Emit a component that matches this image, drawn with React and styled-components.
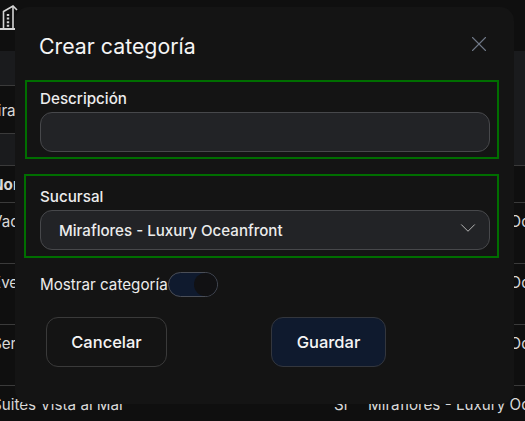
import React from "react";
import styled, { createGlobalStyle } from "styled-components";
import { X, ChevronDown } from "lucide-react";

const GlobalStyle = createGlobalStyle`
  html, body {
    margin: 0;
    padding: 0;
    background: #0f0f0f;
    font-family: "Inter", "Liberation Sans", sans-serif;
    overflow: hidden;
  }
`;

const Page = styled.div`
  position: relative;
  width: 525px;
  height: 421px;
  overflow: hidden;
  background: #0f0f0f;
  color: #d8d8d8;
`;

const TopBar = styled.div`
  height: 51px;
  color: #d4d4d4;
`;

const FilterBlock = styled.div`
  height: 115px;
  box-sizing: border-box;
  padding-top: 34px;
  background: #1a1b1d;
  border-bottom: 1px solid #3a3a3a;
`;

const FilterCell = styled.div`
  width: 300px;
  height: 49px;
  box-sizing: border-box;
  padding-top: 15px;
  margin-left: -16px;
  background: #0f0f0f;
  border-top: 1px solid #3a3a3a;
  border-bottom: 1px solid #3a3a3a;
  font-size: 15.2px;
  white-space: nowrap;
`;

const Row = styled.div`
  display: grid;
  grid-template-columns: 342px 34px 1fr;
  height: ${(p) => p.$h}px;
  margin-left: -8px;
  padding-top: 9px;
  box-sizing: border-box;
  border-bottom: 1px solid ${(p) => (p.$plain ? "transparent" : "#3a3a3a")};
  font-size: 15.2px;
  font-weight: ${(p) => (p.$bold ? 700 : 400)};
  white-space: nowrap;
`;

const Modal = styled.div`
  position: absolute;
  left: 15px;
  top: 7px;
  width: 499px;
  height: 397px;
  box-sizing: border-box;
  padding: 20px 24px 0 10px;
  background: #141414;
  border-radius: 14px;
  color: #f2f2f2;
`;

const Header = styled.div`
  display: flex;
  align-items: center;
  justify-content: space-between;
  height: 38px;
  padding-left: 14px;
  margin-bottom: 15px;
`;

const Title = styled.h2`
  margin: 0;
  font-size: 21.3px;
  font-weight: 400;
  color: #f5f5f5;
`;

const Close = styled.button`
  display: flex;
  padding: 0;
  margin: 0 -2px 4px 0;
  border: none;
  background: none;
  color: #6f7887;
`;

const FieldBox = styled.div`
  box-sizing: border-box;
  width: ${(p) => p.$w}px;
  height: ${(p) => p.$h}px;
  margin-left: ${(p) => (p.$w === 475 ? -1 : 0)}px;
  padding: ${(p) => p.$top}px 7px 0 ${(p) => (p.$w === 475 ? 14 : 13)}px;
  border: 2px solid #006e00;
  margin-bottom: ${(p) => p.$gap}px;
`;

const Label = styled.label`
  display: block;
  height: 23px;
  margin-bottom: 2px;
  line-height: 23px;
  font-size: 15.2px;
  font-weight: 500;
  color: #ececec;
`;

const Input = styled.div`
  display: flex;
  align-items: center;
  justify-content: space-between;
  box-sizing: border-box;
  height: 40px;
  padding: 0 8px 0 18px;
  border: 1px solid #47484b;
  border-radius: 12px;
  background: #222326;
  font-size: 15.1px;
  font-weight: 450;
  color: #ececec;
  svg {
    margin-bottom: 4px;
  }
`;

const ToggleRow = styled.div`
  display: flex;
  align-items: center;
  height: 25px;
  padding-left: 15px;
  margin-bottom: 20px;
  font-size: 15.2px;
  color: #ececec;
`;

const Toggle = styled.span`
  display: flex;
  justify-content: flex-end;
  box-sizing: border-box;
  width: 50px;
  height: 25px;
  border: 1px solid #4a4e57;
  border-radius: 13px;
  background: #0f1a2e;
`;

const Knob = styled.span`
  width: 23px;
  height: 23px;
  border-radius: 50%;
  background: #111113;
`;

const Actions = styled.div`
  display: flex;
  gap: 104px;
  padding-left: 21px;
`;

const Button = styled.button`
  width: ${(p) => p.$w}px;
  height: 50px;
  border: 1px solid ${(p) => (p.$primary ? "#33363d" : "#3a3a3a")};
  border-radius: 12px;
  background: ${(p) => (p.$primary ? "#0f1a2e" : "transparent")};
  color: #f5f5f5;
  font-family: inherit;
  font-size: 16.5px;
  font-weight: 450;
`;

const BuildingIcon = () => (
  <svg width="20" height="32" viewBox="0 0 20 32" fill="none" stroke="currentColor" strokeWidth="1.6">
    <path d="M0 29H18" strokeWidth="2" />
    <path d="M3.5 29V11.5L13 6L17 10" />
    <path d="M13 6V29" />
    <path d="M8 14V27" strokeWidth="2.4" strokeDasharray="2 1.6" />
  </svg>
);

const rows = ["Vacaciones", "Eventos", "Servicios"];

export default function App() {
  return (
    <Page>
      <GlobalStyle />
      <TopBar>
        <BuildingIcon />
      </TopBar>
      <FilterBlock>
        <FilterCell>Miraflores</FilterCell>
      </FilterBlock>
      <Row $h={37} $bold>
        <span>Nombre</span>
      </Row>
      {rows.map((label) => (
        <Row key={label} $h={61}>
          <span>{label}</span>
          <span>Si</span>
          <span>Miraflores - Luxury Oceanfront</span>
        </Row>
      ))}
      <Row $h={35} $plain>
        <span>Suites Vista al Mar</span>
        <span>Si</span>
        <span>Miraflores - Luxury Oceanfront</span>
      </Row>
      <Modal>
        <Header>
          <Title>Crear categoría</Title>
          <Close aria-label="Cerrar">
            <X size={26} strokeWidth={1} />
          </Close>
        </Header>
        <FieldBox $w={474} $h={79} $top={5} $gap={15}>
          <Label>Descripción</Label>
          <Input />
        </FieldBox>
        <FieldBox $w={475} $h={84} $top={9} $gap={14}>
          <Label>Sucursal</Label>
          <Input>
            Miraflores - Luxury Oceanfront
            <ChevronDown size={26} strokeWidth={0.9} color="#b8b8b8" />
          </Input>
        </FieldBox>
        <ToggleRow>
          Mostrar categoría
          <Toggle>
            <Knob />
          </Toggle>
        </ToggleRow>
        <Actions>
          <Button $w={121}>Cancelar</Button>
          <Button $w={115} $primary>Guardar</Button>
        </Actions>
      </Modal>
    </Page>
  );
}
